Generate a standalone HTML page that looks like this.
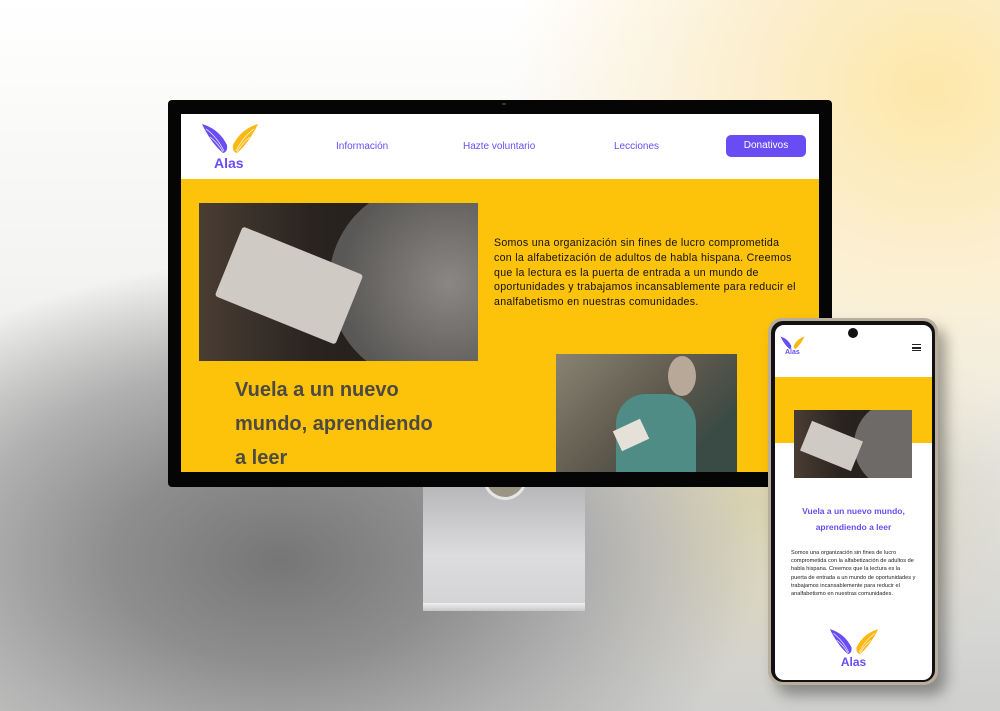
<!DOCTYPE html>
<html><head><meta charset="utf-8"><style>
*{margin:0;padding:0;box-sizing:border-box}
body{width:1000px;height:711px;overflow:hidden;position:relative;font-family:"Liberation Sans",sans-serif;
background:radial-gradient(ellipse 420px 380px at 930px 90px,#fde7a8 0%,#fcefd0 45%,rgba(255,255,255,0) 100%),
radial-gradient(ellipse 480px 300px at 280px 560px,#767676 0%,#8e8e8e 35%,#b0b0b0 65%,rgba(230,230,230,0) 100%),
radial-gradient(ellipse 300px 200px at 750px 500px,#d9d2b0 0%,rgba(240,236,220,0) 100%),
linear-gradient(180deg,#fff 0%,#f3f3f1 40%,#cfcfcd 100%);}
.abs{position:absolute}
.nav{color:#6a4cf5;font-size:10px}
</style></head><body>
<div class="abs" style="left:423px;top:480px;width:162px;height:125px;background:linear-gradient(180deg,#b4b4b6,#dcdcde 60%,#d4d4d6);"></div>
<div class="abs" style="left:483px;top:470px;width:44px;height:30px;border:3px solid #e6e6e6;border-top:none;border-radius:0 0 22px 22px;background:#9b9583"></div>
<div class="abs" style="left:423px;top:603px;width:162px;height:8px;background:linear-gradient(180deg,#f0f0f0,#c8c8c8)"></div>
<div class="abs" style="left:168px;top:100px;width:664px;height:387px;background:#050505;border-radius:4px"></div>
<div class="abs" style="left:181px;top:114px;width:638px;height:358px;background:#fdc20a;overflow:hidden">
  <div class="abs" style="left:0;top:0;width:638px;height:65px;background:#fff"></div>
  <svg class="abs" style="left:20px;top:9px" width="58" height="32" viewBox="0 0 58 32">
    <path d="M1 1 Q18 6 26 22 Q27 29 22 30 Q10 20 1 1Z" fill="#6a4cf5"/>
    <path d="M57 1 Q40 6 32 22 Q31 29 36 30 Q48 20 57 1Z" fill="#fbb713"/>
    <g stroke="#fff" stroke-width=".7" fill="none"><path d="M5 6 Q16 14 23 28"/><path d="M9 14 Q17 20 22 29"/><path d="M53 6 Q42 14 35 28"/><path d="M49 14 Q41 20 36 29"/></g>
  </svg>
  <div class="abs" style="left:33px;top:41px;color:#6a4cf5;font-weight:bold;font-size:14px">Alas</div>
  <div class="abs nav" style="left:155px;top:27px">Información</div>
  <div class="abs nav" style="left:282px;top:27px">Hazte voluntario</div>
  <div class="abs nav" style="left:433px;top:27px">Lecciones</div>
  <div class="abs" style="left:545px;top:21px;width:80px;height:22px;background:#6a4cf5;border-radius:5px;color:#fff;font-size:10px;text-align:center;line-height:22px">Donativos</div>
  <div class="abs" style="left:18px;top:89px;width:279px;height:158px;background:linear-gradient(90deg,#4a3d33,#2a2420 40%,#1f1b18);overflow:hidden">
    <div class="abs" style="left:130px;top:-20px;width:200px;height:200px;background:radial-gradient(circle at 60% 50%,#8a8784,#5a5856 70%);border-radius:50%"></div>
    <div class="abs" style="left:25px;top:45px;width:130px;height:75px;background:#cfcac4;transform:rotate(22deg);border-radius:3px"></div>
  </div>
  <div class="abs" style="left:313px;top:122px;width:305px;font-size:10.6px;line-height:14.8px;color:#111;letter-spacing:.3px">Somos una organización sin fines de lucro comprometida con la alfabetización de adultos de habla hispana. Creemos que la lectura es la puerta de entrada a un mundo de oportunidades y trabajamos incansablemente para reducir el analfabetismo en nuestras comunidades.</div>
  <div class="abs" style="left:54px;top:259px;width:212px;font-size:20px;line-height:34px;font-weight:bold;color:#4c4a42">Vuela a un nuevo mundo, aprendiendo a leer</div>
  <div class="abs" style="left:375px;top:240px;width:181px;height:118px;background:linear-gradient(135deg,#8a8373,#5d584c 50%,#3a4a45 80%)">
    <div class="abs" style="left:60px;top:40px;width:80px;height:78px;background:#4f8c86;border-radius:30px 30px 0 0"></div>
    <div class="abs" style="left:112px;top:2px;width:28px;height:40px;background:#b8a898;border-radius:50%"></div>
    <div class="abs" style="left:60px;top:70px;width:30px;height:22px;background:#e5e0d8;transform:rotate(-25deg)"></div>
  </div>
</div>
<div class="abs" style="left:502px;top:103px;width:4px;height:2px;background:#333"></div>
<div class="abs" style="left:768px;top:318px;width:170px;height:367px;background:#b9ad9d;border-radius:14px;box-shadow:8px 10px 14px rgba(0,0,0,.35)"></div>
<div class="abs" style="left:771px;top:321px;width:164px;height:361px;background:#111;border-radius:12px"></div>
<div class="abs" style="left:775px;top:325px;width:157px;height:355px;background:#fff;border-radius:9px;overflow:hidden">
  <div class="abs" style="left:73px;top:3px;width:10px;height:10px;border-radius:50%;background:#111"></div>
  <svg class="abs" style="left:5px;top:11px" width="25" height="14" viewBox="0 0 58 32"><path d="M1 1 Q18 6 26 22 Q27 29 22 30 Q10 20 1 1Z" fill="#6a4cf5"/><path d="M57 1 Q40 6 32 22 Q31 29 36 30 Q48 20 57 1Z" fill="#fbb713"/></svg>
  <div class="abs" style="left:10px;top:24px;color:#6a4cf5;font-weight:bold;font-size:7px">Alas</div>
  <div class="abs" style="left:137px;top:19px;width:9px;height:7px;border-top:1.5px solid #222;border-bottom:1.5px solid #222"></div>
  <div class="abs" style="left:137px;top:22px;width:9px;height:1.5px;background:#222"></div>
  <div class="abs" style="left:0;top:52px;width:157px;height:66px;background:#fdc20a"></div>
  <div class="abs" style="left:19px;top:85px;width:118px;height:68px;background:linear-gradient(90deg,#4a3d33,#2a2420 40%,#1f1b18);overflow:hidden">
    <div class="abs" style="left:60px;top:-10px;width:90px;height:90px;background:#6d6a67;border-radius:50%"></div>
    <div class="abs" style="left:10px;top:20px;width:55px;height:32px;background:#cfcac4;transform:rotate(22deg)"></div>
  </div>
  <div class="abs" style="left:0;top:178px;width:157px;text-align:center;font-size:8.5px;line-height:16px;font-weight:bold;color:#6a4cf5">Vuela a un nuevo mundo,<br>aprendiendo a leer</div>
  <div class="abs" style="left:16px;top:224px;width:126px;font-size:5.6px;line-height:8.2px;color:#222">Somos una organización sin fines de lucro comprometida con la alfabetización de adultos de habla hispana. Creemos que la lectura es la puerta de entrada a un mundo de oportunidades y trabajamos incansablemente para reducir el analfabetismo en nuestras comunidades.</div>
  <svg class="abs" style="left:54px;top:303px" width="50" height="28" viewBox="0 0 58 32"><path d="M1 1 Q18 6 26 22 Q27 29 22 30 Q10 20 1 1Z" fill="#6a4cf5"/><path d="M57 1 Q40 6 32 22 Q31 29 36 30 Q48 20 57 1Z" fill="#fbb713"/><g stroke="#fff" stroke-width=".7" fill="none"><path d="M5 6 Q16 14 23 28"/><path d="M9 14 Q17 20 22 29"/><path d="M53 6 Q42 14 35 28"/><path d="M49 14 Q41 20 36 29"/></g></svg>
  <div class="abs" style="left:0;top:330px;width:157px;text-align:center;color:#6a4cf5;font-weight:bold;font-size:12px">Alas</div>
</div>
</body></html>
